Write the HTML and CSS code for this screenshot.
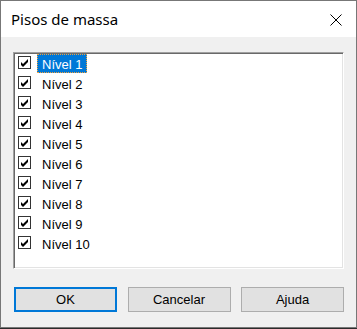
FILE: index.html
```html
<!DOCTYPE html>
<html lang="pt">
<head>
<meta charset="utf-8">
<title>Pisos de massa</title>
<link rel="stylesheet" href="styles.css">
</head>
<body>
<div class="window">
  <div class="titlebar">
    <span class="title">Pisos de massa</span>
    <svg class="close" width="12" height="12" viewBox="0 0 12 12"><path d="M0.5 0.5L11.5 11.5M11.5 0.5L0.5 11.5" stroke="#000" stroke-width="1" fill="none"/></svg>
  </div>
  <div class="content">
    <div class="listbox">
      <ul class="items">
        <li class="item"><span class="check"><svg width="11" height="11" viewBox="0 0 11 11"><path d="M2 5L4 7L9 2L9 5L4 10L2 8Z" fill="#000"/></svg></span><span class="label selected">Nível 1</span></li>
        <li class="item"><span class="check"><svg width="11" height="11" viewBox="0 0 11 11"><path d="M2 5L4 7L9 2L9 5L4 10L2 8Z" fill="#000"/></svg></span><span class="label">Nível 2</span></li>
        <li class="item"><span class="check"><svg width="11" height="11" viewBox="0 0 11 11"><path d="M2 5L4 7L9 2L9 5L4 10L2 8Z" fill="#000"/></svg></span><span class="label">Nível 3</span></li>
        <li class="item"><span class="check"><svg width="11" height="11" viewBox="0 0 11 11"><path d="M2 5L4 7L9 2L9 5L4 10L2 8Z" fill="#000"/></svg></span><span class="label">Nível 4</span></li>
        <li class="item"><span class="check"><svg width="11" height="11" viewBox="0 0 11 11"><path d="M2 5L4 7L9 2L9 5L4 10L2 8Z" fill="#000"/></svg></span><span class="label">Nível 5</span></li>
        <li class="item"><span class="check"><svg width="11" height="11" viewBox="0 0 11 11"><path d="M2 5L4 7L9 2L9 5L4 10L2 8Z" fill="#000"/></svg></span><span class="label">Nível 6</span></li>
        <li class="item"><span class="check"><svg width="11" height="11" viewBox="0 0 11 11"><path d="M2 5L4 7L9 2L9 5L4 10L2 8Z" fill="#000"/></svg></span><span class="label">Nível 7</span></li>
        <li class="item"><span class="check"><svg width="11" height="11" viewBox="0 0 11 11"><path d="M2 5L4 7L9 2L9 5L4 10L2 8Z" fill="#000"/></svg></span><span class="label">Nível 8</span></li>
        <li class="item"><span class="check"><svg width="11" height="11" viewBox="0 0 11 11"><path d="M2 5L4 7L9 2L9 5L4 10L2 8Z" fill="#000"/></svg></span><span class="label">Nível 9</span></li>
        <li class="item"><span class="check"><svg width="11" height="11" viewBox="0 0 11 11"><path d="M2 5L4 7L9 2L9 5L4 10L2 8Z" fill="#000"/></svg></span><span class="label">Nível 10</span></li>
      </ul>
    </div>
    <div class="buttons">
      <button class="btn btn-default">OK</button>
      <button class="btn">Cancelar</button>
      <button class="btn">Ajuda</button>
    </div>
  </div>
</div>
</body>
</html>
```

FILE: styles.css
```css
html, body {
  margin: 0;
  padding: 0;
  background: #2b2b2b;
}
body {
  width: 357px;
  height: 329px;
  overflow: hidden;
}
.window {
  box-sizing: border-box;
  width: 357px;
  height: 328px;
  border: 1px solid #777777;
  background: #f0f0f0;
  display: flex;
  flex-direction: column;
}
.titlebar {
  height: 36px;
  background: #ffffff;
  display: flex;
  align-items: center;
  justify-content: space-between;
  padding: 0 14px 0 10px;
  flex: none;
}
.title {
  font-family: "Noto Sans", "Open Sans", sans-serif;
  font-size: 15px;
  color: #000;
  margin-top: -1px;
}
.close {
  display: block;
  margin-top: 1px;
}
.content {
  flex: 1;
  padding: 15px 12px 0 12px;
  display: flex;
  flex-direction: column;
}
.listbox {
  box-sizing: border-box;
  height: 217px;
  background: #ffffff;
  border-top: 1px solid #a0a0a0;
  border-left: 1px solid #a0a0a0;
  border-right: 1px solid #ffffff;
  border-bottom: 1px solid #ffffff;
  box-shadow: inset 1px 1px 0 #696969, inset -1px -1px 0 #e3e3e3;
  padding: 1px 1px 0 1px;
}
.items {
  list-style: none;
  margin: 0;
  padding: 0 0 0 3px;
}
.item {
  height: 20px;
  display: flex;
  align-items: flex-start;
  font-family: "Liberation Sans", Arial, sans-serif;
  font-size: 13px;
  color: #000;
}
.check {
  box-sizing: border-box;
  width: 13px;
  height: 13px;
  margin-top: 2px;
  border: 1px solid #333333;
  background: #fff;
  display: block;
  flex: none;
}
.check svg {
  display: block;
}
.label {
  box-sizing: border-box;
  margin-left: 6px;
  height: 19px;
  line-height: 17px;
  padding: 1px 4px 1px 4px;
  border: 1px solid transparent;
}
.label.selected {
  background: #0078d7;
  color: #ffffff;
  border: 1px dotted #f2a23c;
}
.buttons {
  display: flex;
  justify-content: space-between;
  margin: 18px 0 0 1px;
}
.btn {
  box-sizing: border-box;
  width: 103px;
  height: 25px;
  margin: 0;
  padding: 0;
  background: #e1e1e1;
  border: 1px solid #adadad;
  font-family: "Liberation Sans", Arial, sans-serif;
  font-size: 13px;
  color: #000;
}
.btn-default {
  border: 2px solid #0078d7;
}
```
